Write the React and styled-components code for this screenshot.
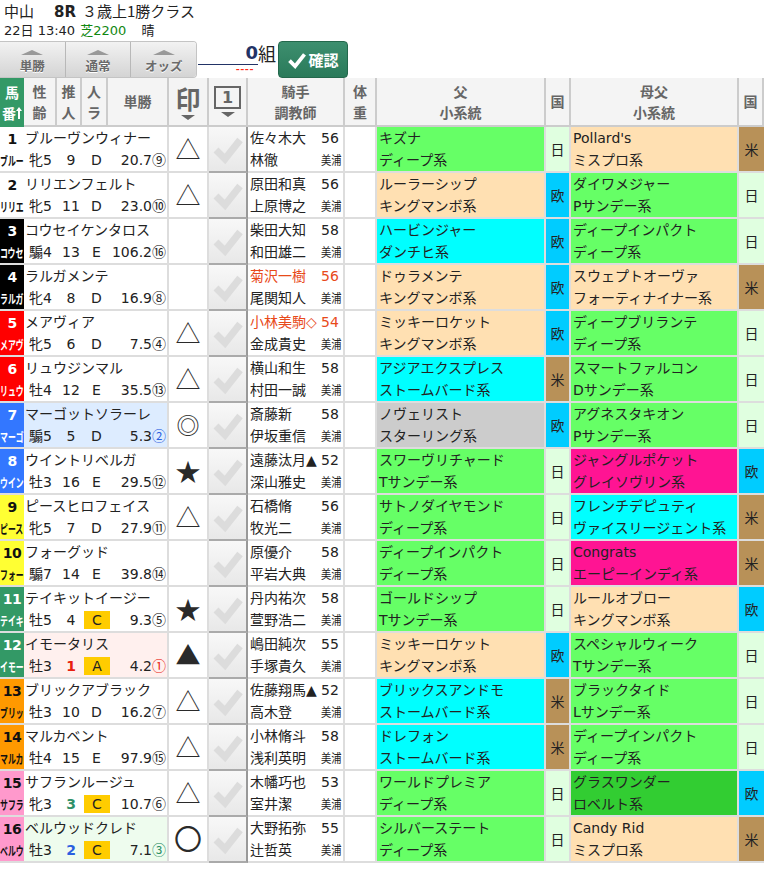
import React from 'react'
import styled, { createGlobalStyle } from 'styled-components'

const FONT = '"DejaVu Sans", "Noto Sans CJK JP", sans-serif'
const CJK = '"Noto Sans CJK JP", sans-serif'

const GlobalStyle = createGlobalStyle`
    body {
        margin: 0;
        background: #fff;
        color: #222;
        font-family: ${FONT};
        font-size: 14px;
    }
`

const WAKU = {
    1: ['#fff', '#111'], 2: ['#000', '#fff'], 3: ['#f00', '#fff'], 4: ['#3377ff', '#fff'],
    5: ['#ffff33', '#111'], 6: ['#339966', '#fff'], 7: ['#ff9900', '#111'], 8: ['#ff99cc', '#111'],
}

const LINE = { G: '#66ff66', P: '#ffe0b2', C: '#00ffff', S: '#cccccc', R: '#ff1493', L: '#32cd32' }
const COUNTRY = { 日: '#e0ffe0', 欧: '#00ccff', 米: '#b89158' }
const RANK_COLOR = { 1: '#e8200f', 2: '#2a5fe0', 3: '#2f9068' }
const MARK_SIZE = { '◎': 23, '〇': 28 }

const horses = [
    { no: 1, w: 1, name: 'ブルーヴンウィナー', short: 'ブルー', sex: '牝5', pop: 9, rank: 'D', odds: '20.7', ord: '⑨', mark: '△', jockey: '佐々木大', kg: 56, trainer: '林徹', sire: 'キズナ', sireLine: 'ディープ系', sc: 'G', sk: '日', dam: "Pollard's", damLine: 'ミスプロ系', dc: 'P', dk: '米' },
    { no: 2, w: 1, name: 'リリエンフェルト', short: 'リリエ', sex: '牝5', pop: 11, rank: 'D', odds: '23.0', ord: '⑩', mark: '△', jockey: '原田和真', kg: 56, trainer: '上原博之', sire: 'ルーラーシップ', sireLine: 'キングマンボ系', sc: 'P', sk: '欧', dam: 'ダイワメジャー', damLine: 'Pサンデー系', dc: 'G', dk: '日' },
    { no: 3, w: 2, name: 'コウセイケンタロス', short: 'コウセ', sex: '騸4', pop: 13, rank: 'E', odds: '106.2', ord: '⑯', mark: '', jockey: '柴田大知', kg: 58, trainer: '和田雄二', sire: 'ハービンジャー', sireLine: 'ダンチヒ系', sc: 'C', sk: '欧', dam: 'ディープインパクト', damLine: 'ディープ系', dc: 'G', dk: '日' },
    { no: 4, w: 2, name: 'ラルガメンテ', short: 'ラルガ', sex: '牝4', pop: 8, rank: 'D', odds: '16.9', ord: '⑧', mark: '', jockey: '菊沢一樹', kg: 56, junior: true, trainer: '尾関知人', sire: 'ドゥラメンテ', sireLine: 'キングマンボ系', sc: 'P', sk: '欧', dam: 'スウェプトオーヴァ', damLine: 'フォーティナイナー系', dc: 'P', dk: '米' },
    { no: 5, w: 3, name: 'メアヴィア', short: 'メアヴ', sex: '牝5', pop: 6, rank: 'D', odds: '7.5', ord: '④', mark: '△', jockey: '小林美駒◇', kg: 54, junior: true, trainer: '金成貴史', sire: 'ミッキーロケット', sireLine: 'キングマンボ系', sc: 'P', sk: '欧', dam: 'ディープブリランテ', damLine: 'ディープ系', dc: 'G', dk: '日' },
    { no: 6, w: 3, name: 'リュウジンマル', short: 'リュウ', sex: '牡4', pop: 12, rank: 'E', odds: '35.5', ord: '⑬', mark: '△', jockey: '横山和生', kg: 58, trainer: '村田一誠', sire: 'アジアエクスプレス', sireLine: 'ストームバード系', sc: 'C', sk: '米', dam: 'スマートファルコン', damLine: 'Dサンデー系', dc: 'G', dk: '日' },
    { no: 7, w: 4, tint: '#ddecff', name: 'マーゴットソラーレ', short: 'マーゴ', sex: '騸5', pop: 5, rank: 'D', odds: '5.3', ord: '②', ordRank: 2, mark: '◎', jockey: '斎藤新', kg: 58, trainer: '伊坂重信', sire: 'ノヴェリスト', sireLine: 'スターリング系', sc: 'S', sk: '欧', dam: 'アグネスタキオン', damLine: 'Pサンデー系', dc: 'G', dk: '日' },
    { no: 8, w: 4, name: 'ウイントリベルガ', short: 'ウイン', sex: '牡3', pop: 16, rank: 'E', odds: '29.5', ord: '⑫', mark: '★', jockey: '遠藤汰月▲', kg: 52, trainer: '深山雅史', sire: 'スワーヴリチャード', sireLine: 'Tサンデー系', sc: 'G', sk: '日', dam: 'ジャングルポケット', damLine: 'グレイソヴリン系', dc: 'R', dk: '欧' },
    { no: 9, w: 5, name: 'ピースヒロフェイス', short: 'ピース', sex: '牝5', pop: 7, rank: 'D', odds: '27.9', ord: '⑪', mark: '△', jockey: '石橋脩', kg: 56, trainer: '牧光二', sire: 'サトノダイヤモンド', sireLine: 'ディープ系', sc: 'G', sk: '日', dam: 'フレンチデピュティ', damLine: 'ヴァイスリージェント系', dc: 'C', dk: '米' },
    { no: 10, w: 5, name: 'フォーグッド', short: 'フォー', sex: '騸7', pop: 14, rank: 'E', odds: '39.8', ord: '⑭', mark: '', jockey: '原優介', kg: 58, trainer: '平岩大典', sire: 'ディープインパクト', sireLine: 'ディープ系', sc: 'G', sk: '日', dam: 'Congrats', damLine: 'エーピーインディ系', dc: 'R', dk: '米' },
    { no: 11, w: 6, name: 'テイキットイージー', short: 'テイキ', sex: '牡5', pop: 4, rank: 'C', hot: true, odds: '9.3', ord: '⑤', mark: '★', jockey: '丹内祐次', kg: 58, trainer: '萱野浩二', sire: 'ゴールドシップ', sireLine: 'Tサンデー系', sc: 'G', sk: '日', dam: 'ルールオブロー', damLine: 'キングマンボ系', dc: 'P', dk: '欧' },
    { no: 12, w: 6, tint: '#fff0ee', name: 'イモータリス', short: 'イモー', sex: '牡3', pop: 1, popRank: 1, rank: 'A', hot: true, odds: '4.2', ord: '①', ordRank: 1, mark: '▲', jockey: '嶋田純次', kg: 55, trainer: '手塚貴久', sire: 'ミッキーロケット', sireLine: 'キングマンボ系', sc: 'P', sk: '欧', dam: 'スペシャルウィーク', damLine: 'Tサンデー系', dc: 'G', dk: '日' },
    { no: 13, w: 7, name: 'ブリックアブラック', short: 'ブリッ', sex: '牡3', pop: 10, rank: 'D', odds: '16.2', ord: '⑦', mark: '△', jockey: '佐藤翔馬▲', kg: 52, trainer: '高木登', sire: 'ブリックスアンドモ', sireLine: 'ストームバード系', sc: 'C', sk: '米', dam: 'ブラックタイド', damLine: 'Lサンデー系', dc: 'G', dk: '日' },
    { no: 14, w: 7, name: 'マルカベント', short: 'マルカ', sex: '牡4', pop: 15, rank: 'E', odds: '97.9', ord: '⑮', mark: '△', jockey: '小林脩斗', kg: 58, trainer: '浅利英明', sire: 'ドレフォン', sireLine: 'ストームバード系', sc: 'C', sk: '米', dam: 'ディープインパクト', damLine: 'ディープ系', dc: 'G', dk: '日' },
    { no: 15, w: 8, name: 'サフランルージュ', short: 'サフラ', sex: '牝3', pop: 3, popRank: 3, rank: 'C', hot: true, odds: '10.7', ord: '⑥', mark: '△', jockey: '木幡巧也', kg: 53, trainer: '室井潔', sire: 'ワールドプレミア', sireLine: 'ディープ系', sc: 'G', sk: '日', dam: 'グラスワンダー', damLine: 'ロベルト系', dc: 'L', dk: '欧' },
    { no: 16, w: 8, tint: '#eefcee', name: 'ベルウッドクレド', short: 'ベルウ', sex: '牡3', pop: 2, popRank: 2, rank: 'C', hot: true, odds: '7.1', ord: '③', ordRank: 3, mark: '〇', jockey: '大野拓弥', kg: 55, trainer: '辻哲英', sire: 'シルバーステート', sireLine: 'ディープ系', sc: 'G', sk: '日', dam: 'Candy Rid', damLine: 'ミスプロ系', dc: 'P', dk: '米' },
]

const colWidths = [24, 33, 25, 26, 61, 40, 39, 72, 25, 32, 169, 25, 168, 25]

const TitleRow = styled.div`
    height: 21px;
    line-height: 21px;
    padding-left: 4px;
    font-size: 15px;
    font-family: ${CJK};
    white-space: nowrap;
`

const RaceNo = styled.b`
    margin: 0 6px 0 20px;
    font-family: ${FONT};
    font-size: 15px;
    line-height: 1;
`

const InfoRow = styled.div`
    height: 20px;
    line-height: 20px;
    padding-left: 4px;
    font-size: 13px;
    white-space: nowrap;
`

const Turf = styled.span`
    color: #118811;
    margin: 0 15px 0 1px;
    line-height: 1;
`

const Toolbar = styled.div`
    display: flex;
    height: 37px;
`

const Tabs = styled.div`
    display: flex;
    width: 197px;
    height: 37px;
    border: 1px solid #c4c4c4;
    border-left: 0;
    border-radius: 0 4px 4px 0;
    box-sizing: border-box;
    overflow: hidden;
`

const Tab = styled.div`
    flex: 1;
    display: flex;
    flex-direction: column;
    align-items: center;
    padding-top: 8px;
    background: linear-gradient(#f2f2f2, #d4d4d4);
    border-right: 1px solid #b8b8b8;
    color: #6a6a6a;
    font-family: ${CJK};
    font-size: 12.5px;
    font-weight: 700;
    line-height: 18px;
    text-shadow: 0 1px 0 #fff;

    &:last-child {
        border-right: 0;
    }
`

const UpArrow = styled.i`
    display: block;
    width: 0;
    height: 0;
    margin-bottom: 2px;
    border-left: 11px solid transparent;
    border-right: 11px solid transparent;
    border-bottom: 5px solid #999;
`

const Count = styled.div`
    width: 79px;
    display: flex;
    align-items: flex-start;
    justify-content: flex-end;
    font-family: ${CJK};
    font-size: 18px;
    line-height: 24px;
`

const CountBox = styled.div`
    position: relative;
    width: 60px;
    height: 23px;
    border-bottom: 1px solid #223366;
    text-align: right;
    color: #223366;
    font-weight: 700;
    font-family: ${FONT};
    font-size: 18px;
`

const Dashes = styled.span`
    position: absolute;
    right: 4px;
    top: 22px;
    color: #ff2a1a;
    font-family: ${CJK};
    font-size: 11px;
    font-weight: 700;
    line-height: 10px;
    letter-spacing: 0.5px;
`

const ConfirmButton = styled.div`
    display: flex;
    align-items: center;
    justify-content: center;
    gap: 1px;
    width: 70px;
    height: 37px;
    margin-left: 2px;
    background: linear-gradient(#3d8f6f, #2a7a5a);
    border: 1px solid #24684c;
    border-radius: 4px;
    box-sizing: border-box;
    color: #fff;
    font-family: ${CJK};
    font-size: 15px;
    font-weight: 700;
`

const Table = styled.table`
    width: 764px;
    table-layout: fixed;
    border-collapse: separate;
    border-spacing: 0;
`

const Th = styled.th`
    height: 49px;
    padding: 0;
    background: ${p => p.$green ? '#339966' : '#f4f4f4'};
    border-right: ${p => p.$green ? '0' : '2px solid #ccc'};
    border-bottom: ${p => p.$green ? '0' : '2px solid #ccc'};
    box-sizing: border-box;
    color: ${p => p.$green ? '#fff' : '#666'};
    font-family: ${CJK};
    font-size: 14px;
    font-weight: 700;
    line-height: 21px;
    text-align: center;
    vertical-align: middle;
    white-space: nowrap;
    overflow: hidden;
`

const BigGlyph = styled.div`
    font-size: 25px;
    line-height: 30px;
    color: #666;
`

const BoxOne = styled.div`
    width: 23px;
    height: 19px;
    margin: 0 auto 3px;
    border: 2px solid #666;
    font-family: ${FONT};
    font-size: 16px;
    line-height: 19px;
    color: #666;
`

const DownArrow = styled.i`
    display: block;
    width: 0;
    height: 0;
    margin: 2px auto 0;
    border-left: 7px solid transparent;
    border-right: 7px solid transparent;
    border-top: 5px solid #666;
`

const Waku = styled.td`
    width: 24px;
    padding: 0;
    background: ${p => WAKU[p.$w][0]};
    color: ${p => WAKU[p.$w][1]};
    border-bottom: 2px solid #ddd;
    box-sizing: border-box;
    text-align: center;
    vertical-align: top;
    overflow: hidden;
`

const WakuNo = styled.div`
    height: 24px;
    font-size: 14px;
    font-weight: 700;
    line-height: 24px;
    letter-spacing: -0.5px;
`

const WakuShort = styled.div`
    width: 38px;
    height: 20px;
    font-family: ${CJK};
    font-size: 12.5px;
    font-weight: 700;
    line-height: 20px;
    white-space: nowrap;
    text-align: left;
    transform: scaleX(0.63);
    transform-origin: left center;
`

const NameCell = styled.td`
    height: 23px;
    padding: 0 0 0 1px;
    background: ${p => p.$tint || '#fff'};
    border-right: 2px solid #ddd;
    box-sizing: border-box;
    font-size: 14px;
    line-height: 23px;
    white-space: nowrap;
    overflow: hidden;
`

const StatCell = styled.td`
    height: 23px;
    padding: 0 0 0 ${p => p.$shift || 0}px;
    background: ${p => p.$tint || '#fff'};
    border-bottom: 2px solid #ddd;
    box-sizing: border-box;
    color: ${p => p.$color || '#222'};
    font-weight: ${p => p.$color ? 700 : 400};
    line-height: 21px;
    text-align: center;
    white-space: nowrap;
`

const RankBox = styled.span`
    display: inline-block;
    width: 26px;
    height: 18px;
    margin-top: 1px;
    margin-left: -1px;
    background: #ffcc00;
    line-height: 18px;
    vertical-align: top;
`

const OddsCell = styled(StatCell)`
    padding-right: 1px;
    border-right: 2px solid #ddd;
    font-weight: 400;
    text-align: right;
`

const Ord = styled.span`
    font-family: ${CJK};
    line-height: 1;
    color: ${p => p.$color || '#222'};
`

const MarkCell = styled.td`
    padding: 0 0 3px;
    border-right: 2px solid #ddd;
    border-bottom: 2px solid #ddd;
    box-sizing: border-box;
    color: #2a2a2a;
    font-family: ${CJK};
    font-size: ${p => MARK_SIZE[p.$mark] || 25}px;
    line-height: 30px;
    text-align: center;
`

const CheckCell = styled.td`
    padding: 0;
    background: linear-gradient(#f8f8f8, #e8e8e8);
    border-right: 2px solid #999;
    border-bottom: 2px solid #aaa;
    box-sizing: border-box;
    text-align: center;
    vertical-align: middle;

    svg {
        display: block;
        margin: 0 auto;
    }
`

const JockeyCell = styled.td`
    height: 23px;
    padding: 0 0 0 2px;
    border-bottom: ${p => p.$last ? '2px solid #ddd' : '0'};
    box-sizing: border-box;
    color: ${p => p.$junior ? '#e84a1a' : '#222'};
    line-height: ${p => p.$last ? '21px' : '23px'};
    white-space: nowrap;
    overflow: visible;
`

const KgCell = styled(JockeyCell)`
    padding: 0 0 0 1px;
    border-right: 2px solid #ddd;
    overflow: visible;
`

const Stable = styled.span`
    display: inline-block;
    font-family: ${CJK};
    font-size: 12.5px;
    line-height: 1;
    transform: scaleX(0.82);
    transform-origin: left center;
`

const Weight = styled.td`
    padding: 0;
    border-right: 2px solid #ddd;
    border-bottom: 2px solid #ddd;
    box-sizing: border-box;
`

const BloodCell = styled.td`
    height: 46px;
    padding: 0 0 0 2px;
    background: ${p => LINE[p.$c]};
    border-right: 2px solid #ddd;
    border-bottom: 2px solid #ddd;
    box-sizing: border-box;
    line-height: 22px;
    white-space: nowrap;
    overflow: hidden;
    vertical-align: top;
`

const CountryCell = styled.td`
    padding: 0;
    background: ${p => COUNTRY[p.$k]};
    border-right: ${p => p.$end ? '0' : '2px solid #ddd'};
    border-bottom: 2px solid #ddd;
    box-sizing: border-box;
    font-family: ${CJK};
    font-size: 14px;
    text-align: center;
`

const CheckMark = ({ color, size, width }) => (
    <svg width={size} height={size} viewBox="0 0 32 32">
        <polyline points="4,17 13,26 28,7" fill="none" stroke={color} strokeWidth={width} />
    </svg>
)

// 馬番 sort indicator
const SortArrow = () => (
    <svg width="6" height="12" viewBox="0 0 6 12">
        <path d="M3 0 L6 4 H4 V12 H2 V4 H0 Z" fill="#fff" />
    </svg>
)

const HorseRow = ({ h }) => (
    <>
        <tr>
            <Waku rowSpan={2} $w={h.w}>
                <WakuNo>{h.no}</WakuNo>
                <WakuShort>{h.short}</WakuShort>
            </Waku>
            <NameCell colSpan={4} $tint={h.tint}>{h.name}</NameCell>
            <MarkCell rowSpan={2} $mark={h.mark}>{h.mark}</MarkCell>
            <CheckCell rowSpan={2}><CheckMark color="#dcdcdc" size={32} width={7} /></CheckCell>
            <JockeyCell $junior={h.junior}>{h.jockey}</JockeyCell>
            <KgCell $junior={h.junior}>{h.kg}</KgCell>
            <Weight rowSpan={2} />
            <BloodCell rowSpan={2} $c={h.sc}>{h.sire}<br />{h.sireLine}</BloodCell>
            <CountryCell rowSpan={2} $k={h.sk}>{h.sk}</CountryCell>
            <BloodCell rowSpan={2} $c={h.dc}>{h.dam}<br />{h.damLine}</BloodCell>
            <CountryCell rowSpan={2} $k={h.dk} $end>{h.dk}</CountryCell>
        </tr>
        <tr>
            <StatCell $tint={h.tint}>{h.sex}</StatCell>
            <StatCell $tint={h.tint} $shift={3} $color={RANK_COLOR[h.popRank]}>{h.pop}</StatCell>
            <StatCell $tint={h.tint} $shift={3}>{h.hot ? <RankBox>{h.rank}</RankBox> : h.rank}</StatCell>
            <OddsCell $tint={h.tint}>{h.odds}<Ord $color={RANK_COLOR[h.ordRank]}>{h.ord}</Ord></OddsCell>
            <JockeyCell $last>{h.trainer}</JockeyCell>
            <KgCell $last><Stable>美浦</Stable></KgCell>
        </tr>
    </>
)

const App = () => (
    <>
        <GlobalStyle />
        <TitleRow>中山<RaceNo>8R</RaceNo>３歳上1勝クラス</TitleRow>
        <InfoRow>22日 13:40 <Turf>芝2200</Turf>晴</InfoRow>
        <Toolbar>
            <Tabs>
                <Tab><UpArrow />単勝</Tab>
                <Tab><UpArrow />通常</Tab>
                <Tab><UpArrow />オッズ</Tab>
            </Tabs>
            <Count>
                <CountBox>0<Dashes>----</Dashes></CountBox>組
            </Count>
            <ConfirmButton><CheckMark color="#fff" size={20} width={6} />確認</ConfirmButton>
        </Toolbar>
        <Table>
            <colgroup>
                {colWidths.map((w, i) => <col key={i} style={{ width: w }} />)}
            </colgroup>
            <thead>
                <tr>
                    <Th $green>馬<br />番<SortArrow /></Th>
                    <Th>性<br />齢</Th>
                    <Th>推<br />人</Th>
                    <Th>人<br />ラ</Th>
                    <Th>単勝</Th>
                    <Th><BigGlyph>印</BigGlyph><DownArrow /></Th>
                    <Th><BoxOne>1</BoxOne><DownArrow /></Th>
                    <Th colSpan={2}>騎手<br />調教師</Th>
                    <Th>体<br />重</Th>
                    <Th>父<br />小系統</Th>
                    <Th>国</Th>
                    <Th>母父<br />小系統</Th>
                    <Th>国</Th>
                </tr>
            </thead>
            <tbody>
                {horses.map(h => <HorseRow key={h.no} h={h} />)}
            </tbody>
        </Table>
    </>
)

export default App
